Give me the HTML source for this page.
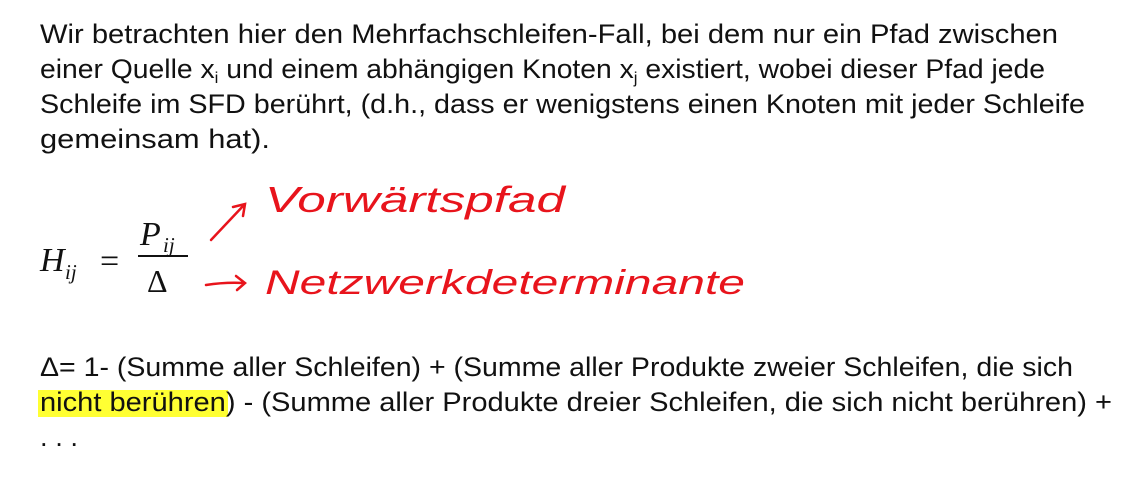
<!DOCTYPE html>
<html><head><meta charset="utf-8"><style>
html,body{margin:0;padding:0;background:#fff;width:1144px;height:487px;overflow:hidden}
svg{display:block}
.t{font-family:"Liberation Sans",sans-serif;font-size:27px;fill:#111}
.m{font-family:"Liberation Serif",serif;font-style:italic;fill:#111}
.h{font-family:"Liberation Sans",sans-serif;fill:#e8141c;font-style:italic}
</style></head><body>
<svg width="1144" height="487" viewBox="0 0 1144 487" xmlns="http://www.w3.org/2000/svg">
<text class="t" x="40" y="43" textLength="1018" lengthAdjust="spacingAndGlyphs">Wir betrachten hier den Mehrfachschleifen-Fall, bei dem nur ein Pfad zwischen</text>
<text class="t" x="40" y="78" textLength="1005" lengthAdjust="spacingAndGlyphs">einer Quelle x<tspan font-size="16" dy="5">i</tspan><tspan dy="-5"> und einem abhängigen Knoten x</tspan><tspan font-size="16" dy="5">j</tspan><tspan dy="-5"> existiert, wobei dieser Pfad jede</tspan></text>
<text class="t" x="40" y="113" textLength="1045" lengthAdjust="spacingAndGlyphs">Schleife im SFD berührt, (d.h., dass er wenigstens einen Knoten mit jeder Schleife</text>
<text class="t" x="40" y="148" textLength="230" lengthAdjust="spacingAndGlyphs">gemeinsam hat).</text>

<text class="m" x="40" y="271" font-size="34">H</text>
<text class="m" x="65" y="279" font-size="21">ij</text>
<text font-family="Liberation Serif,serif" x="100" y="272" font-size="34" fill="#111">=</text>
<text class="m" x="140" y="245" font-size="34">P</text>
<text class="m" x="163" y="252" font-size="21">ij</text>
<rect x="138" y="255" width="50" height="2" fill="#111"/>
<text font-family="Liberation Serif,serif" x="147" y="292" font-size="32" fill="#111">Δ</text>

<path d="M211 240 L244 205 M233 207 L245 204 L243 216" stroke="#e8141c" stroke-width="2.5" fill="none" stroke-linecap="round"/>
<path d="M206 285 Q225 282 244 283 M236 276 L245 283 L237 290" stroke="#e8141c" stroke-width="2.5" fill="none" stroke-linecap="round"/>
<text class="h" x="265" y="212" textLength="300" lengthAdjust="spacingAndGlyphs" font-size="36">Vorwärtspfad</text>
<text class="h" x="265" y="294" textLength="480" lengthAdjust="spacingAndGlyphs" font-size="34">Netzwerkdeterminante</text>

<rect x="38" y="390" width="190" height="27" fill="#ffff33"/>
<text class="t" x="40" y="376" textLength="1033" lengthAdjust="spacingAndGlyphs">Δ= 1- (Summe aller Schleifen) + (Summe aller Produkte zweier Schleifen, die sich</text>
<text class="t" x="40" y="411" textLength="1072" lengthAdjust="spacingAndGlyphs">nicht berühren) - (Summe aller Produkte dreier Schleifen, die sich nicht berühren) +</text>
<text class="t" x="40" y="446" textLength="38" lengthAdjust="spacingAndGlyphs">. . .</text>
</svg>
</body></html>
